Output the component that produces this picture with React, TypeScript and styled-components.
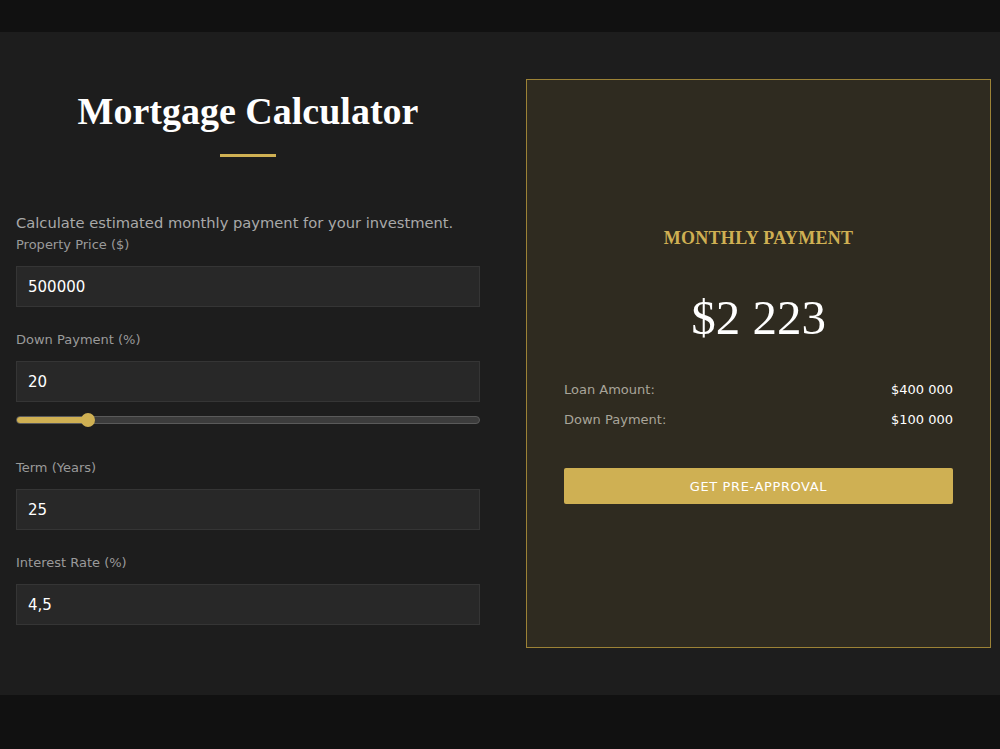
import styled, { createGlobalStyle } from 'styled-components';

const GlobalStyle = createGlobalStyle`
	html, body {
		margin: 0;
		padding: 0;
		background: #111111;
	}
	* {
		box-sizing: border-box;
	}
`;

const GOLD = '#cfb053';
const SANS = '"DejaVu Sans", "Open Sans", sans-serif';
const SERIF = '"Liberation Serif", "DejaVu Serif", serif';

const Page = styled.div`
	width: 1000px;
	min-height: 749px;
	background: #111111;
	padding: 32px 0 54px;
`;

const Section = styled.section`
	background: #1d1d1d;
	display: grid;
	grid-template-columns: 464px 465px;
	align-items: start;
	column-gap: 46px;
	padding: 47px 9px 47px 16px;
`;

const Form = styled.div`
	display: flex;
	flex-direction: column;
`;

const Heading = styled.h1`
	margin: 8px 0 0;
	font-family: ${SERIF};
	font-weight: 700;
	font-size: 38px;
	line-height: 48px;
	color: #ffffff;
	text-align: center;
`;

const Divider = styled.div`
	width: 56px;
	height: 3px;
	background: ${GOLD};
	margin: 19px auto 56px;
`;

const Intro = styled.p`
	margin: 0 0 4px;
	font-family: ${SANS};
	font-size: 14.7px;
	line-height: 20px;
	color: #a9a9a9;
`;

type FieldProps = {
	$gap: number;
}

const Field = styled.div<FieldProps>`
	display: flex;
	flex-direction: column;
	margin-bottom: ${props => props.$gap}px;

	&:last-child {
		margin-bottom: 0;
	}
`;

const Label = styled.label`
	font-family: ${SANS};
	font-size: 13px;
	line-height: 16px;
	color: #9a9a9a;
	margin-bottom: 13px;
`;

const Input = styled.input`
	height: 41px;
	width: 100%;
	background: #282828;
	border: 1px solid #353535;
	color: #ffffff;
	font-family: ${SANS};
	font-size: 15px;
	padding: 0 11px;
	outline: none;
`;

const Slider = styled.div`
	position: relative;
	margin-top: 11px;
	height: 14px;
	display: flex;
	align-items: center;
`;

const Track = styled.div`
	width: 100%;
	height: 8px;
	border-radius: 4px;
	background: #3c3c3c;
	border: 1px solid #5a5a5a;
	overflow: hidden;
`;

const Fill = styled.div`
	height: 100%;
	background: ${GOLD};
`;

const Thumb = styled.div`
	position: absolute;
	top: 0;
	width: 14px;
	height: 14px;
	border-radius: 50%;
	background: ${GOLD};
	transform: translateX(-50%);
`;

const Card = styled.aside`
	border: 1px solid #9c8236;
	background: #2f2b20;
	display: flex;
	flex-direction: column;
	justify-content: center;
	padding: 3px 37px 0;
	height: 569px;
`;

const CardTitle = styled.h2`
	margin: 0;
	font-family: ${SERIF};
	font-weight: 700;
	font-size: 18px;
	line-height: 24px;
	letter-spacing: 0.3px;
	color: ${GOLD};
	text-align: center;
`;

const Amount = styled.div`
	margin: 38px 0 34px;
	font-family: ${SERIF};
	font-size: 49px;
	line-height: 60px;
	color: #ffffff;
	text-align: center;
`;

const Row = styled.div`
	display: flex;
	justify-content: space-between;
	font-family: ${SANS};
	font-size: 13px;
	line-height: 16px;
	margin-bottom: 14px;
`;

const RowLabel = styled.span`
	color: #a9a59a;
`;

const RowValue = styled.span`
	color: #ffffff;
`;

const Button = styled.button`
	margin-top: 26px;
	height: 36px;
	width: 100%;
	border: none;
	border-radius: 2px;
	background: ${GOLD};
	color: #ffffff;
	font-family: ${SANS};
	font-size: 13px;
	letter-spacing: 0.6px;
	cursor: pointer;
`;

const fields = [
	{ id: 'price', label: 'Property Price ($)', value: '500000' },
	{ id: 'down', label: 'Down Payment (%)', value: '20', slider: true },
	{ id: 'term', label: 'Term (Years)', value: '25' },
	{ id: 'rate', label: 'Interest Rate (%)', value: '4,5' },
];

const App = () => {
	const downPct = 15.5;
	return (
		<>
			<GlobalStyle />
			<Page>
				<Section>
					<Form>
						<Heading>Mortgage Calculator</Heading>
						<Divider />
						<Intro>Calculate estimated monthly payment for your investment.</Intro>
						{fields.map(f => (
							<Field key={f.id} $gap={f.slider ? 33 : 25}>
								<Label htmlFor={f.id}>{f.label}</Label>
								<Input id={f.id} defaultValue={f.value} />
								{f.slider && (
									<Slider>
										<Track>
											<Fill style={{ width: `${downPct}%` }} />
										</Track>
										<Thumb style={{ left: `${downPct}%` }} />
									</Slider>
								)}
							</Field>
						))}
					</Form>
					<Card>
						<CardTitle>MONTHLY PAYMENT</CardTitle>
						<Amount>$2 223</Amount>
						<Row>
							<RowLabel>Loan Amount:</RowLabel>
							<RowValue>$400 000</RowValue>
						</Row>
						<Row>
							<RowLabel>Down Payment:</RowLabel>
							<RowValue>$100 000</RowValue>
						</Row>
						<Button>GET PRE-APPROVAL</Button>
					</Card>
				</Section>
			</Page>
		</>
	);
};

export default App;
